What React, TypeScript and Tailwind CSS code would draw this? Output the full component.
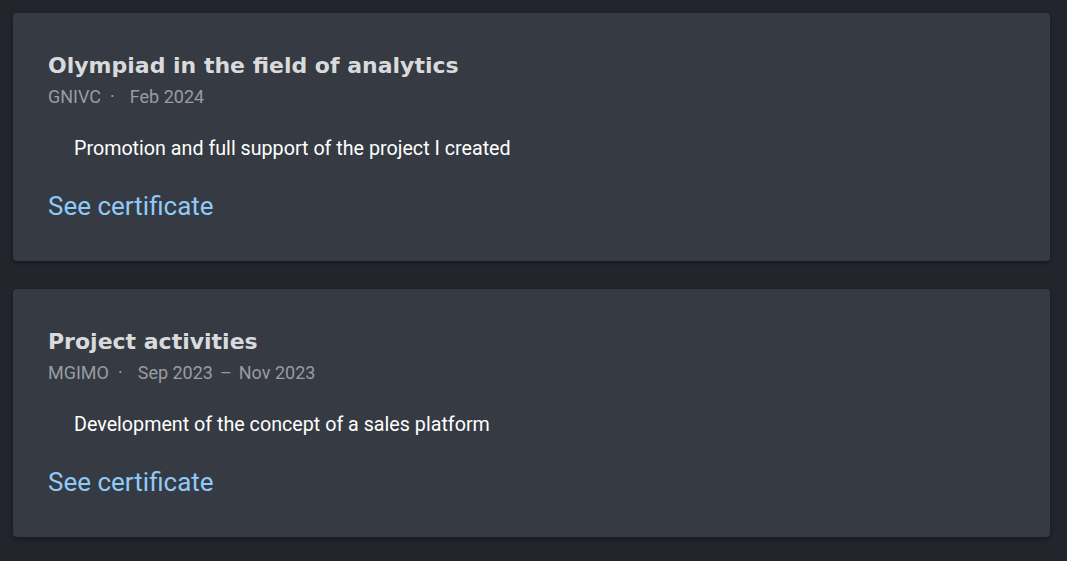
import React from 'react';

const certificates = [
  {
    id: '1',
    title: 'Olympiad in the field of analytics',
    org: 'GNIVC',
    period: ['Feb 2024'],
    points: ['Promotion and full support of the project I created'],
  },
  {
    id: '2',
    title: 'Project activities',
    org: 'MGIMO',
    period: ['Sep 2023', 'Nov 2023'],
    points: ['Development of the concept of a sales platform'],
  },
];

function CertificateCard({ title, org, period, points }: (typeof certificates)[number]) {
  return (
    <div className="bg-[#363a42] rounded-[4px] shadow-[0_2px_4px_rgba(0,0,0,0.35)] pl-[35px] pr-6 pt-[38px] h-[248px]">
      <h2 className="font-['DejaVu_Sans',sans-serif] font-bold text-[22px] leading-[30px] text-[#d9dadc]">
        {title}
      </h2>
      <div className="flex items-center text-[18px] leading-[27px] text-[#9a9ca1] mt-[2px]">
        <span>{org}</span>
        <span className="ml-[9px] mr-[15px]">·</span>
        <span>{period[0]}</span>
        {period[1] && (
          <>
            <span className="mx-[7px]">–</span>
            <span>{period[1]}</span>
          </>
        )}
      </div>
      <ul className="mt-[25px] pl-[26px] list-none">
        {points.map((p) => (
          <li key={p} className="text-[19.7px] leading-[28px] text-white">
            {p}
          </li>
        ))}
      </ul>
      <a href="#" className="block mt-[27px] text-[26px] leading-[32px] text-[#90caf9] w-fit">
        See certificate
      </a>
    </div>
  );
}

export default function App() {
  return (
    <div className="bg-[#22252c] min-h-screen pt-[13px] pl-[13px] pr-[17px] pb-6 font-['Roboto',sans-serif]">
      <div className="flex flex-col gap-[28px]">
        {certificates.map((c) => (
          <CertificateCard key={c.id} {...c} />
        ))}
      </div>
    </div>
  );
}
